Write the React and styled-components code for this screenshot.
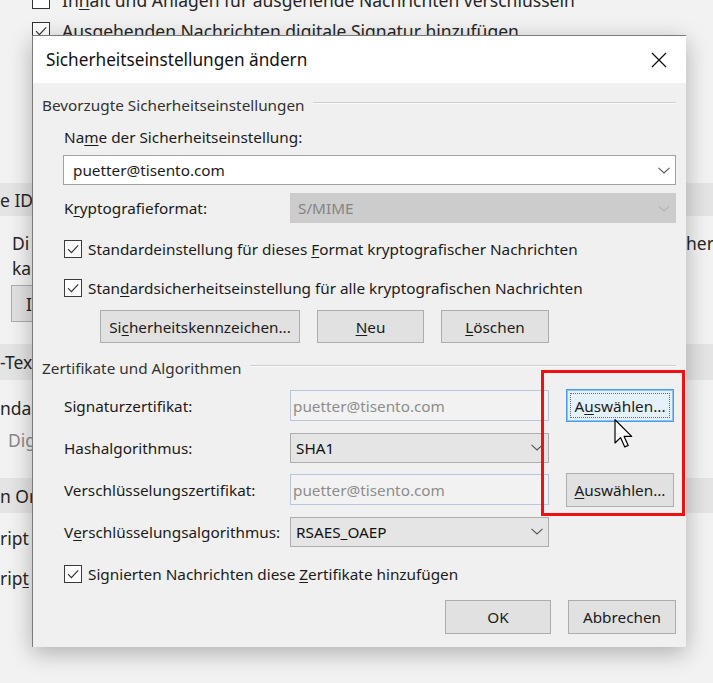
import React from "react";
import styled, { createGlobalStyle, css } from "styled-components";

const GlobalStyle = createGlobalStyle`
  html, body { margin: 0; padding: 0; }
  body {
    background: #f2f2f2;
    font-family: "Noto Sans", "Open Sans", sans-serif;
  }
`;

const Screen = styled.div`
  position: relative;
  width: 713px;
  height: 683px;
  overflow: hidden;
  background: #f2f2f2;
`;

/* ---------- Trust Center page behind the dialog ---------- */

const Backdrop = styled.div`
  display: flex;
  flex-direction: column;
  margin-top: -15px;
  font-size: 17.5px;
  color: #262626;
  white-space: nowrap;
`;

const BgCheckRow = styled.div`
  height: ${(p) => p.$h}px;
  display: flex;
  align-items: center;
  gap: 12px;
  padding-left: 32px;
`;

const BgBox = styled.span`
  width: 18px;
  height: 18px;
  box-sizing: border-box;
  border: 1px solid #333;
  background: #fff;
  display: flex;
  align-items: center;
  justify-content: center;
`;

const Band = styled.div`
  height: ${(p) => p.$h}px;
  margin-top: ${(p) => p.$mt}px;
  background: #e4e4e4;
  display: flex;
  align-items: center;
`;

const BgLine = styled.div`
  height: ${(p) => p.$h}px;
  margin-top: ${(p) => p.$mt || 0}px;
  padding-left: ${(p) => p.$pl || 0}px;
  display: flex;
  align-items: center;
  justify-content: space-between;
  color: ${(p) => (p.$muted ? "#8a8a8a" : "#262626")};
`;

const BgTail = styled.span`
  width: 27px;
  overflow: hidden;
`;

const BgButton = styled.div`
  height: 37px;
  width: 60px;
  margin-top: 5px;
  margin-left: 11px;
  box-sizing: border-box;
  background: #e1e1e1;
  border: 1px solid #adadad;
  display: flex;
  align-items: center;
  padding-left: 14px;
`;

/* ---------- dialog ---------- */

const Dialog = styled.section`
  position: absolute;
  left: 32px;
  top: 35px;
  width: 654px;
  height: 612px;
  box-sizing: border-box;
  background: #f0f0f0;
  border-left: 1px solid #7a7a7a;
  border-top: 1px solid #7a7a7a;
  box-shadow: 0 6px 22px rgba(0, 0, 0, 0.28);
  display: flex;
  flex-direction: column;
  font-size: 15.3px;
  color: #1b1b1b;
  white-space: nowrap;
`;

const TitleBar = styled.header`
  height: 47px;
  flex: none;
  background: #fff;
  display: flex;
  align-items: center;
  justify-content: space-between;
  padding: 0 19px 0 13px;
  font-size: 17.2px;
  color: #111;
`;

const CloseIcon = () => (
  <svg width="16" height="16" viewBox="0 0 16 16">
    <path d="M1 1 L15 15 M15 1 L1 15" stroke="#111" strokeWidth="1.3" fill="none" />
  </svg>
);

const Body = styled.div`
  padding: 0 10px 0 9px;
  display: flex;
  flex-direction: column;
`;

const GroupHeader = styled.div`
  height: 24px;
  margin-top: ${(p) => p.$mt}px;
  display: flex;
  align-items: center;
  gap: 8px;
  color: #333;
  &::after {
    content: "";
    flex: 1;
    height: 1px;
    margin-bottom: 4px;
    background: #cfcfcf;
    border-bottom: 1px solid #fbfbfb;
  }
`;

const GroupContent = styled.div`
  padding-left: 21px;
  display: flex;
  flex-direction: column;
`;

const Label = styled.div`
  height: 20px;
  margin-top: ${(p) => p.$mt || 0}px;
  display: flex;
  align-items: center;
  padding-left: 1px;
`;

const Key = styled.span`
  text-decoration: underline;
  text-underline-offset: 2px;
  text-decoration-thickness: 1px;
`;

const FieldRow = styled.div`
  display: grid;
  grid-template-columns: 227px 1fr;
  align-items: center;
  margin-top: ${(p) => p.$mt}px;
`;

const comboTone = {
  edit: css`
    background: #fff;
    border-color: #a2a2a2;
    color: #1b1b1b;
    padding-left: 9px;
  `,
  disabled: css`
    background: #cccccc;
    border-color: #cccccc;
    color: #858585;
    padding-left: 7px;
  `,
  list: css`
    background: #e5e5e5;
    border-color: #adadad;
    color: #111;
    padding-left: 5px;
  `,
};

const Combo = styled.div`
  height: 30px;
  margin-top: ${(p) => p.$mt || 0}px;
  box-sizing: border-box;
  border: 1px solid;
  display: flex;
  align-items: center;
  justify-content: space-between;
  padding-right: 5px;
  ${(p) => comboTone[p.$tone]}
`;

const Chevron = ({ color }) => (
  <svg width="12" height="7" viewBox="0 0 12 7">
    <polyline points="0.5,0.8 6,6 11.5,0.8" fill="none" stroke={color} strokeWidth="1.1" />
  </svg>
);

const ReadOnlyField = styled.div`
  height: 31px;
  box-sizing: border-box;
  border: 1px solid #b7c6dc;
  background: #f2f2f2;
  color: #8d8d8d;
  display: flex;
  align-items: center;
  padding-left: 2px;
`;

const CheckRow = styled.label`
  height: 22px;
  margin-top: ${(p) => p.$mt}px;
  display: flex;
  align-items: center;
  gap: 6px;
  padding-left: 1px;
`;

const Box = styled.span`
  width: 18px;
  height: 18px;
  flex: none;
  box-sizing: border-box;
  border: 1px solid #3a3a3a;
  background: #fdfdfd;
  display: flex;
  align-items: center;
  justify-content: center;
`;

const Tick = () => (
  <svg width="14" height="14" viewBox="0 0 14 14">
    <polyline points="2,7.2 5.4,10.6 12.2,3.4" fill="none" stroke="#333" strokeWidth="1.2" />
  </svg>
);

const ButtonRow = styled.div`
  display: flex;
  gap: 17px;
  margin-top: ${(p) => p.$mt}px;
  padding-left: ${(p) => p.$pl || 0}px;
  justify-content: ${(p) => (p.$end ? "flex-end" : "flex-start")};
`;

const Button = styled.button`
  position: relative;
  width: ${(p) => p.$w}px;
  height: ${(p) => p.$h || 33}px;
  box-sizing: border-box;
  padding: 0;
  font: inherit;
  color: #1b1b1b;
  background: #e1e1e1;
  border: 1px solid #adadad;
  ${(p) =>
    p.$focused &&
    css`
      background: #e5f1fb;
      border: 1px solid #4a9ee8;
      box-shadow: inset 0 0 0 1px #8cc2f2;
      &::after {
        content: "";
        position: absolute;
        inset: 3px;
        border: 1px dotted #6a6a6a;
      }
    `}
`;

const CertGrid = styled.div`
  display: grid;
  grid-template-columns: 227px 259px 1fr;
  grid-auto-rows: 31px;
  row-gap: 11px;
  align-items: center;
  margin-top: 10px;
  & > button {
    margin-left: 17px;
  }
`;

/* ---------- overlays ---------- */

const Highlight = styled.div`
  position: absolute;
  left: 541px;
  top: 370px;
  width: 144px;
  height: 146px;
  box-sizing: border-box;
  border: 3px solid #ee1111;
  pointer-events: none;
`;

const Pointer = styled.svg`
  position: absolute;
  left: 614px;
  top: 419px;
`;

export default function App() {
  return (
    <Screen>
      <GlobalStyle />

      <Backdrop>
        <BgCheckRow $h={30}>
          <BgBox />
          <span>
            In<Key>h</Key>alt und Anlagen für ausgehende Nachrichten verschlüsseln
          </span>
        </BgCheckRow>
        <BgCheckRow $h={32}>
          <BgBox>
            <Tick />
          </BgBox>
          <span>Ausgehenden Nachrichten digitale Signatur hinzufügen</span>
        </BgCheckRow>

        <Band $h={33} $mt={136}>e IDs</Band>
        <BgLine $h={25} $mt={14} $pl={12}>
          <span>Di</span>
          <BgTail>her</BgTail>
        </BgLine>
        <BgLine $h={25} $pl={12}>
          <span>ka</span>
        </BgLine>
        <BgButton>I</BgButton>

        <Band $h={36} $mt={22}>-Tex</Band>
        <BgLine $h={32} $mt={12}>
          <span>nda</span>
        </BgLine>
        <BgLine $h={32} $pl={8} $muted>
          <span>Dig</span>
        </BgLine>

        <Band $h={35} $mt={22}>n Or</Band>
        <BgLine $h={40} $mt={5}>
          <span>ript i</span>
        </BgLine>
        <BgLine $h={40}>
          <span>
            rip<Key>t</Key> i
          </span>
        </BgLine>
      </Backdrop>

      <Dialog>
        <TitleBar>
          <span>Sicherheitseinstellungen ändern</span>
          <CloseIcon />
        </TitleBar>

        <Body>
          <GroupHeader $mt={10}>Bevorzugte Sicherheitseinstellungen</GroupHeader>
          <GroupContent>
            <Label $mt={10}>
              Na<Key>m</Key>e der Sicherheitseinstellung:
            </Label>
            <Combo $tone="edit" $mt={8}>
              <span>puetter@tisento.com</span>
              <Chevron color="#555" />
            </Combo>
            <FieldRow $mt={8}>
              <Label>
                K<Key>r</Key>yptografieformat:
              </Label>
              <Combo $tone="disabled">
                <span>S/MIME</span>
                <Chevron color="#b4b4b4" />
              </Combo>
            </FieldRow>
            <CheckRow $mt={15}>
              <Box>
                <Tick />
              </Box>
              <span>
                Standardeinstellung für dieses <Key>F</Key>ormat kryptografischer Nachrichten
              </span>
            </CheckRow>
            <CheckRow $mt={17}>
              <Box>
                <Tick />
              </Box>
              <span>
                Stan<Key>d</Key>ardsicherheitseinstellung für alle kryptografischen Nachrichten
              </span>
            </CheckRow>
            <ButtonRow $mt={11} $pl={37}>
              <Button $w={200}>
                Si<Key>c</Key>herheitskennzeichen...
              </Button>
              <Button $w={107}>
                <Key>N</Key>eu
              </Button>
              <Button $w={108}>
                <Key>L</Key>öschen
              </Button>
            </ButtonRow>
          </GroupContent>

          <GroupHeader $mt={13}>Zertifikate und Algorithmen</GroupHeader>
          <GroupContent>
            <CertGrid>
              <Label>Signaturzertifikat:</Label>
              <ReadOnlyField>puetter@tisento.com</ReadOnlyField>
              <Button $w={108} $focused>
                A<Key>u</Key>swählen...
              </Button>

              <Label>Hashalgorithmus:</Label>
              <Combo $tone="list">
                <span>SHA1</span>
                <Chevron color="#555" />
              </Combo>
              <span />

              <Label>Verschlüsselungszertifikat:</Label>
              <ReadOnlyField>puetter@tisento.com</ReadOnlyField>
              <Button $w={108} $h={34}>
                <Key>A</Key>uswählen...
              </Button>

              <Label>
                V<Key>e</Key>rschlüsselungsalgorithmus:
              </Label>
              <Combo $tone="list">
                <span>RSAES_OAEP</span>
                <Chevron color="#555" />
              </Combo>
              <span />
            </CertGrid>

            <CheckRow $mt={16}>
              <Box>
                <Tick />
              </Box>
              <span>
                Signierten Nachrichten diese <Key>Z</Key>ertifikate hinzufügen
              </span>
            </CheckRow>
          </GroupContent>

          <ButtonRow $mt={15} $end>
            <Button $w={106} $h={34}>OK</Button>
            <Button $w={108} $h={34}>Abbrechen</Button>
          </ButtonRow>
        </Body>
      </Dialog>

      <Highlight />
      <Pointer width="20" height="30" viewBox="0 0 13 20">
        <path
          d="M0.5 0.5 L0.5 16 L4.2 12.4 L7 18.6 L9.3 17.6 L6.6 11.6 L11.6 11.6 Z"
          fill="#fff"
          stroke="#000"
          strokeWidth="0.8"
          strokeLinejoin="round"
        />
      </Pointer>
    </Screen>
  );
}
